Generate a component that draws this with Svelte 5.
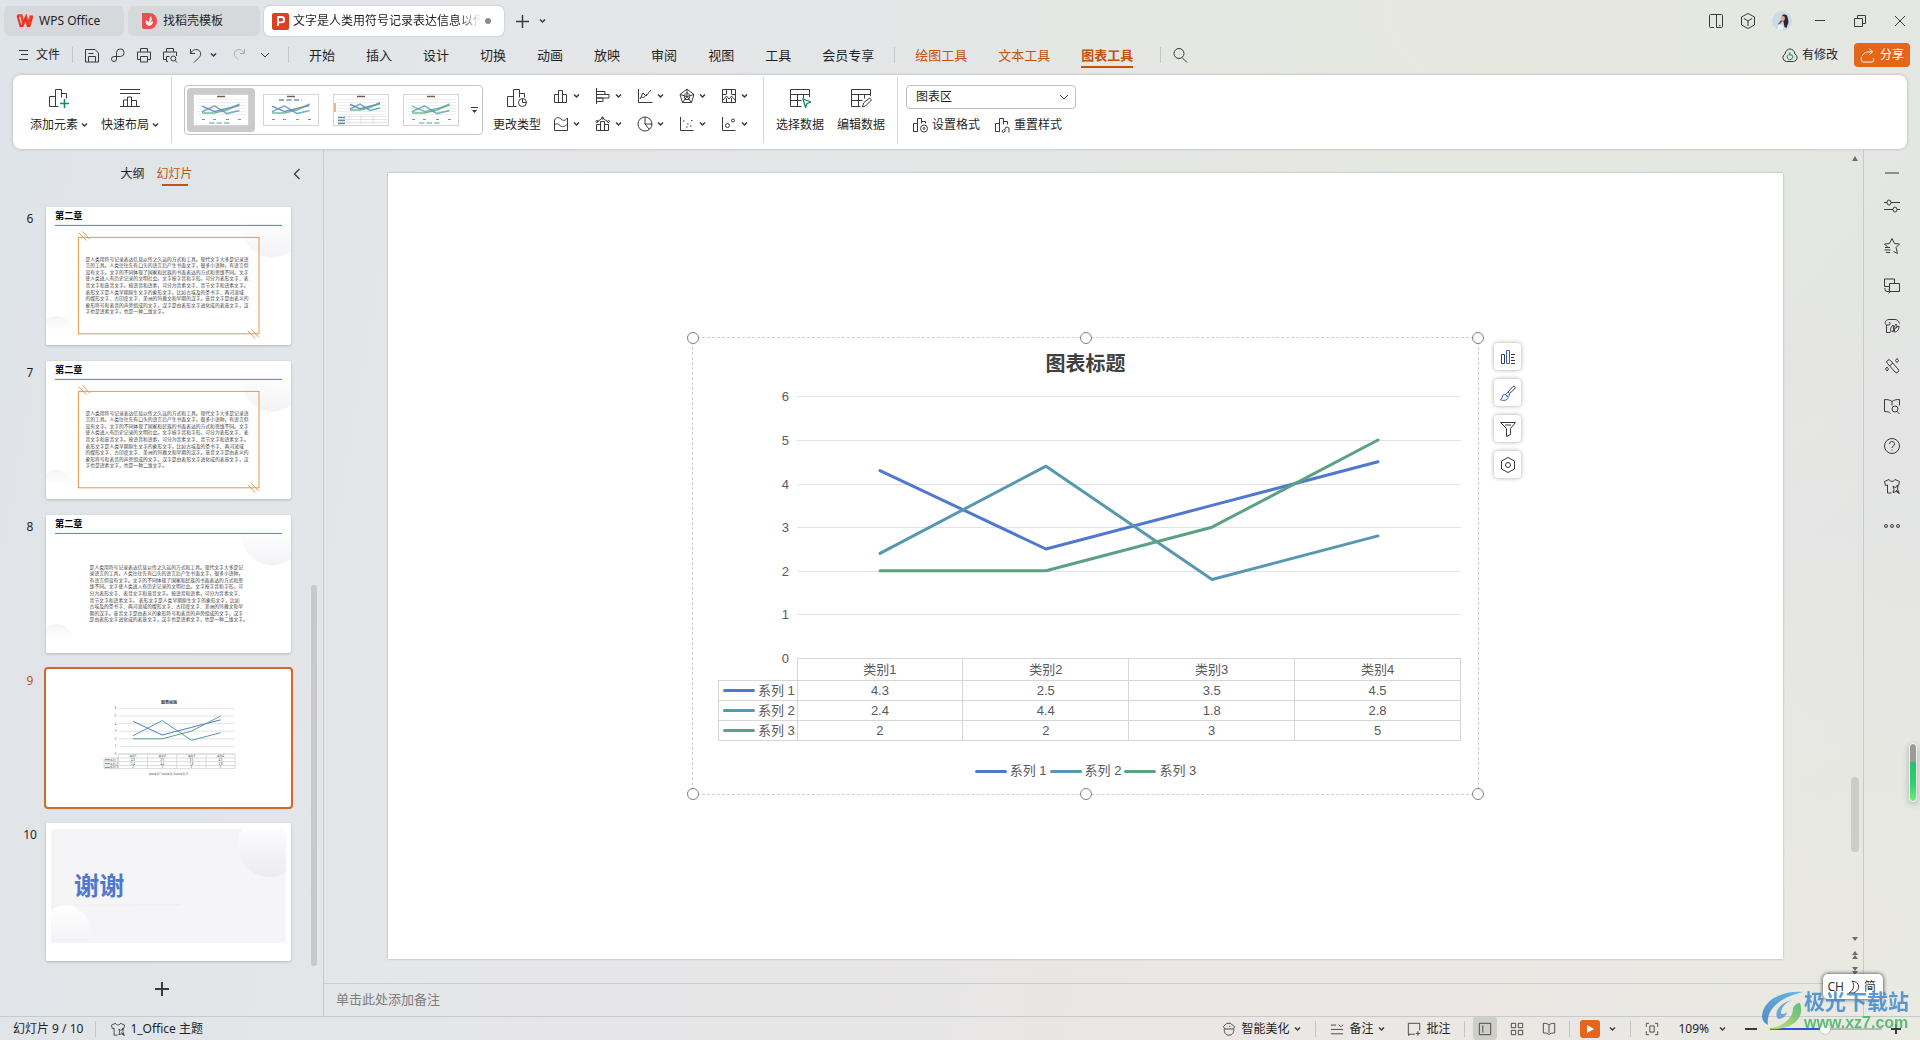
<script>
  // Outline icons, drawn on a 16 x 16 grid: [main path, accent path, accent colour]
  const icons = {
    save: ["M1.5 2.5h9.5l3.5 3.5v9h-13zM4.5 6.5h5M4.5 15v-5.500h7v5.500"],
    link: ["M6.500 5.500a3.800 3.800 0 1 1 4 4h-6.500a2.500 2.500 0 1 0 2.500 2.500v-6.500"],
    print: ["M4.500 5v-3.500h7v3.500M4 12.500h-2.500v-7.500h13v7.500h-2.500M4.500 9.500h7v5.500h-7z"],
    preview: ["M4.500 5v-3.500h7v3.500M4 12.500h-2.500v-7.500h13v4M6 14.500h-1.500v-5h3M13.800 11.500a2.500 2.500 0 1 1-5 0 2.500 2.500 0 1 1 5 0M13 13.500l2 2"],
    undo: ["M2.500 2v4.500h4.500M2.500 6.500c2-4 6-5 8.500-3s2 5 0 7l-5 5"],
    redo: ["M13.500 2v4.500h-4.500M13.500 6.500c-2-4-6-5-8.500-3s-2 5 0 7l2 2"],
    search: ["M12 6.500a5 5 0 1 1-10 0 5 5 0 1 1 10 0M10 10.500l5 5"],
    sidebar: ["M1.500 2.500a1 1 0 0 1 1-1h11a1 1 0 0 1 1 1v11a1 1 0 0 1-1 1h-5v-13M6 14.500h-3.500a1 1 0 0 1-1-1v-11M11 12.500h1.500"],
    cube: ["M8 .500l6.500 3.500v8l-6.500 3.500-6.500-3.500v-8zM4 5.500l4 2.500 4-2.500M8 8v5"],
    restore: ["M2.500 5.500h8v8h-8zM5.500 5v-2.500h8v8h-2.500"],
    close: ["M3 3l10 10M13 3l-10 10"],
    cloud: ["M4.500 14.500a4 4 0 0 1-1.500-7.500c.500-3 2.500-5 5-5s4.500 2 5 5a4 4 0 0 1-1.500 7.500z", "M6.500 7.500a2.800 2.800 0 1 0 3.500.500M8 5l-.5 3h2.500", "#16895f"],
    share: ["M1.500 9.500v3.500a2 2 0 0 0 2 2h9a2 2 0 0 0 2-2v-2.500M2.500 8.500c1-3 4-4.500 10.500-4.500M10 1l3.500 3-3.500 3"],
    bars: ["M1.500 14.500v-8h4v8M5.500 14.500v-12h4v12M9.500 6.500h4v8h-12"],
    hbars: ["M1.500 0v16M2 3.500h8v3h-8M2 6.500h12v3.500h-12M2 10h6v3.500h-6"],
    line: ["M1.500 1v13.500h14M3 11l3-6 3 3 5-6M4 9c3 1 4 0 6-3"],
    radar: ["M8 1l7 5.500-2.500 8h-9l-2.500-8zM8 4.500l3 3-1.200 4h-3.600l-1.200-4zM8 1v7M1 6.500l7 2 7-2M3.500 14.500l4.500-6 4.500 6"],
    stock: ["M1.500 1.500h13v13h-13zM5.500 2v4M10.500 2v4M2 6.500h3.500M10.500 6.500h3.500M2 12l3.500-4 2.500 3 2.500-3 3.500 4M5.500 10v4M10.500 10v4"],
    area: ["M1.500 4c2-3 4-3 6.500-1s4 2 6.500-1v12.500h-13zM2 8.500c2-1 3-1 5 1s5 1 7-1"],
    combo: ["M1.500 14.500v-6h4v6M5.500 14.500v-9h4v9M9.500 8.500h4v6h-12M2 6l5.500-4 5.500 4M3 5.500a1 1 0 1 1-2 0 1 1 0 1 1 2 0M8.500 2a1 1 0 1 1-2 0 1 1 0 1 1 2 0M14.500 5.500a1 1 0 1 1-2 0 1 1 0 1 1 2 0"],
    pie: ["M15 8a7 7 0 1 1-14 0 7 7 0 1 1 14 0M8 1v7h7M8 8l4 5"],
    scatter: ["M1.500 1v13.500h13M4 5h1.500M8 8h1.500M12 4.500h1.500M7 11h1.500M11 10h1.500"],
    bubble: ["M1.500 1v13.500h13M8.500 9.500a2 2 0 1 1-4 0 2 2 0 1 1 4 0M13.500 4.500a1.500 1.500 0 1 1-3 0 1.500 1.500 0 1 1 3 0"],
    format: ["M1.500 14.500v-8h4v8zM5.500 14.500v-13h4v5M9.500 4.500h4v2M15.500 11.500a3.500 3.500 0 1 1-7 0 3.500 3.500 0 1 1 7 0M13 11.500a1 1 0 1 1-2 0 1 1 0 1 1 2 0"],
    reset: ["M1.500 14.500v-8h4v8zM5.500 14.500v-13h4v6M9.500 4.500h4v3M10 14.500h1v-2.500a2 2 0 0 1 4 0v3.500M9.500 12.500l-1.500 2 2 1.500"],
    settings: ["M0 4.500h3M7 4.500h9M7 4.500a2 2.500 0 1 1-4 0 2 2.500 0 1 1 4 0M0 11.500h9M13 11.500h3M13 11.500a2 2.500 0 1 1-4 0 2 2.500 0 1 1 4 0"],
    star: ["M3.500 9l-3-3 5-.5 2.500-5 2.500 5 5 .500-3.500 3.500 1.500 6-4-2M1 9.500h5M.500 12h6M2 14.500h4"],
    swap: ["M5.500 8.500h-5v-7.500h10v4.500M5.500 5.500h10v8h-10zM1 10v1.500a2 2 0 0 0 2 2h3M4.500 11.500l2 2-2 2"],
    leaf: ["M1.500 6.500c-1-3 1-5 3.500-5h6c2 0 3.500 1 4.500 4M2 7h3c1 0 1.500-1 .500-3M2.500 7v7.500h4M7 14c-1-3 0-5 2-7 1 3 1 5-1 7M10 14c0-3 2-5 5-6 0 3-1 6-5 6M10 14c-.5-3 .5-6 2-8 1 1 1 2 0 4"],
    magic: ["M3.500 2.500a2 2 0 0 1 3 0l7.500 8.500a2 2 0 0 1-3 3l-7.500-8.500a2 2 0 0 1 0-3zM6 7.500l3-2.500M13 .500l1.500 2-1.500 2-1.500-2zM3 9l1.500 2-1.500 2-1.500-2z"],
    book: ["M8 3.500c-2-1.500-4-2-7.500-2v12c3 0 5 .500 6 2M8 3.500c2-1.500 4-2 7.500-2v6M8 3.500v4M14 11a3 3 0 1 1-6 0 3 3 0 1 1 6 0M13 13.500l2.500 2.500"],
    help: ["M15.500 8a7.500 7.500 0 1 1-15 0 7.500 7.500 0 1 1 15 0M5.500 6a2.500 2.500 0 1 1 3.500 2.300c-.8.400-1 .8-1 1.700M8 11.500v1"],
    shirt: ["M5 1.500c1 2.500 5 2.500 6 0l4.500 2-1 4h-2M5 1.500l-4.500 2 1 4 2-.5v8h4M9 8l2 1.500 3-1.500-.5 3 1.500 4-3-1.500-3 1 1-3zM12 12l3.500 4"],
    more: ["M3.500 8a1.500 1.500 0 1 1-3 0 1.500 1.500 0 1 1 3 0M9.500 8a1.500 1.500 0 1 1-3 0 1.500 1.500 0 1 1 3 0M15.500 8a1.500 1.500 0 1 1-3 0 1.500 1.500 0 1 1 3 0"],
    chartEl: ["M1.500 5.500h3v9h-3zM11 5.500h4M11 8.500h3M11 11.500h4M11 14.500h4", "M6.500 1.500h3v13h-3z", "#2f62d9"],
    brush: ["M8 7l5-5.500c1-.8 3 .7 2 2l-5.500 5", "M5.500 9.500l2.500-2.500 1.500 1.500 0 2-1.500 1M5.500 9.500c-2-.5-3.500 1-3 2.500l-2 3c3 .500 6.500 1 7.500-2.500zM5.500 9.500l2.500 2", "#2f62d9"],
    filter: ["M.500 1.500h15l-5 6v6l-4 2v-8zM5 4h6"],
    hex: ["M8 .500l6.500 3.500v8l-6.500 3.500-6.500-3.500v-8zM10.500 8a2.500 2.500 0 1 1-5 0 2.500 2.500 0 1 1 5 0"],
    beauty: ["M2.500 8c0 4.500 1.500 7 5.500 7s5.500-2.500 5.500-7M1.500 5.500l4-4h4l5 4-2 2.500h-9zM8 4.500l1.500 1"],
    notes: ["M1 3.500h6M10 3l2.500 2.500 2.500-2.500M1 8.500h14M1 13.500h14"],
    comment: ["M9 14h-7v1.500l-.5-2v-12h13v8M12.500 10.500v5M10 13h5"],
    normal: ["M1.500 1.500h13v13h-13zM5.500 4v8"],
    grid: ["M1.500 1.500h5v5h-5zM9.500 1.500h5v5h-5zM1.500 9.500h5v5h-5zM9.500 9.500h5v5h-5z"],
    read: ["M8 3.500c-1-1.500-3.500-2-6.500-2v11c3 0 5.500.500 6.500 2 1-1.500 3.500-2 6.500-2v-11c-3 0-5.500.500-6.500 2zM8 3.500v9"],
    fit: ["M4.500 1.500h-3v4M11.500 1.500h3v4M4.500 14.500h-3v-4M11.500 14.500h3v-4M5.500 4.500h5v7h-5z"]
  };

  const quick = ["save", "link", "print", "preview"];
  const menus = ["开始", "插入", "设计", "切换", "动画", "放映", "审阅", "视图", "工具", "会员专享"];
  const toolMenus = ["绘图工具", "文本工具", "图表工具"];
  const chartTypes = ["bars", "hbars", "line", "radar", "stock", "area", "combo", "pie", "scatter", "bubble"];
  const rail = ["settings", "star", "swap", "leaf", "magic", "book", "help", "shirt", "more"];
  const chartTools = ["chartEl", "brush", "filter", "hex"];
  const handles = ["tl", "tc", "tr", "bl", "bc", "br"];

  const categories = ["类别1", "类别2", "类别3", "类别4"];
  const series = [
    { name: "系列 1", color: "#5078ce", values: [4.3, 2.5, 3.5, 4.5] },
    { name: "系列 2", color: "#5798b0", values: [2.4, 4.4, 1.8, 2.8] },
    { name: "系列 3", color: "#5aa282", values: [2, 2, 3, 5] }
  ];
  const ticks = [6, 5, 4, 3, 2, 1, 0];

  const wide = [
    "是人类用符号记录表达信息以传之久远的方式和工具。现代文字大多是记录语",
    "言的工具。人类往往先有口头的语言后产生书面文字，很多小语种，有语言但",
    "没有文字。文字的不同体现了国家和民族的书面表达的方式和思维不同。文字",
    "使人类进入有历史记录的文明社会。文字按字音和字形，可分为表形文字、表",
    "音文字和意音文字。按语音和语素，可分为音素文字、音节文字和语素文字。",
    "表形文字是人类早期原生文字的象形文字，比如古埃及的圣书字、两河流域",
    "的楔形文字、古印度文字、美洲的玛雅文和早期的汉字。意音文字是由表义的",
    "象形符号和表音的声旁组成的文字，汉字是由表形文字进化成的表意文字，汉",
    "字也是语素文字，也是一种二维文字。"
  ];
  const narrow = [
    "是人类用符号记录表达信息以传之久远的方式和工具。现代文字大多是记",
    "录语言的工具。人类往往先有口头的语言后产生书面文字，很多小语种，",
    "有语言但没有文字。文字的不同体现了国家和民族的书面表达的方式和思",
    "维不同。文字使人类进入有历史记录的文明社会。文字按字音和字形，可",
    "分为表形文字、表音文字和意音文字。按语音和语素，可分为音素文字、",
    "音节文字和语素文字。 表形文字是人类早期原生文字的象形文字，比如",
    "古埃及的圣书字、两河流域的楔形文字、古印度文字、美洲的玛雅文和早",
    "期的汉字。意音文字是由表义的象形符号和表音的声旁组成的文字，汉字",
    "是由表形文字进化成的表意文字，汉字也是语素文字，也是一种二维文字。"
  ];
  const slides = [
    { no: 6, kind: "text", boxed: true, lines: wide },
    { no: 7, kind: "text", boxed: true, lines: wide },
    { no: 8, kind: "text", boxed: false, lines: narrow },
    { no: 9, kind: "chart" },
    { no: 10, kind: "thanks" }
  ];

  let current = $state(9);
  let activeMenu = $state("图表工具");
  let layout = $state(0);
  let zoom = $state(49);

  // Turns the values of a series into the points of a polyline
  function points(values, x0, step, yZero, unit) {
    return values.map((v, i) => `${x0 + step * i},${yZero - v * unit}`).join(" ");
  }
</script>

{#snippet icon(name, size = 16)}
  <svg class="icon" width={size} height={size} viewBox="0 0 16 16" aria-hidden="true">
    <path d={icons[name][0]} />
    {#if icons[name][1]}<path d={icons[name][1]} stroke={icons[name][2]} />{/if}
  </svg>
{/snippet}

{#snippet chev()}
  <svg class="icon chev" width="7" height="6" viewBox="0 0 7 6" aria-hidden="true"><path d="M1 1.500l2.500 2.500 2.500-2.500" /></svg>
{/snippet}

{#snippet bigChev()}
  <svg class="icon" width="12" height="12" viewBox="0 0 12 12" aria-hidden="true"><path d="M2 4l4 4 4-4" /></svg>
{/snippet}

<div class="app">
  <header class="titlebar">
    <button class="doc home">
      <svg width="17" height="14" viewBox="0 0 17 14" aria-hidden="true">
        <path d="M1.500 1.500h4l1.500 8 3-6.500 1.500 7 3.500-8.500" fill="none" stroke="#f0412d" stroke-width="2.400" />
        <path d="M1.500 1.500l3 10.500h2l3.500-8 2 8h1.500l3-10.500" fill="none" stroke="#e8321f" stroke-width="2" />
      </svg>
      WPS Office
    </button>
    <button class="doc docer">
      <svg width="15" height="16" viewBox="0 0 15 16" aria-hidden="true">
        <path d="M0 0h8a7 8 0 0 1 0 16h-6a2 2 0 0 1-2-2z" fill="#ee4d50" />
        <path d="M7 13c-3-1-4-3-3-6 2 1 3 2 3 4 0-3 0-5 2-8 1 3 1 5-1 7l3-2c0 3-1 4-4 5z" fill="#fff" />
      </svg>
      找稻壳模板
    </button>
    <button class="doc open">
      <svg width="17" height="17" viewBox="0 0 17 17" aria-hidden="true">
        <rect width="17" height="17" rx="2" fill="#dd3f26" />
        <path d="M6 13v-9h3.500a2.700 2.700 0 0 1 0 5.400h-3.500" fill="none" stroke="#fff" stroke-width="1.800" />
      </svg>
      <span class="name">文字是人类用符号记录表达信息以传</span>
      <i class="dot"></i>
    </button>
    <button class="plain" aria-label="新建">
      <svg class="icon" width="15" height="15" viewBox="0 0 15 15"><path d="M7.500 1v13M1 7.500h13" stroke-width="1.500" /></svg>
    </button>
    <button class="plain" aria-label="标签列表">{@render chev()}</button>
    <div class="window">
      <button class="plain" aria-label="侧栏">{@render icon("sidebar")}</button>
      <button class="plain" aria-label="应用">{@render icon("cube")}</button>
      <button class="plain" aria-label="账号">
        <svg width="20" height="20" viewBox="0 0 20 20" aria-hidden="true">
          <circle cx="10" cy="10" r="10" fill="#cbdbe6" />
          <path d="M10 5c1-2 5-2 5.500 1l1 5-2 6-2-1-1-5z" fill="#2b2630" />
          <path d="M9 6c1-2 4-1 4 1s-1 3-2 3-2-2-2-4z" fill="#d9a9a0" />
          <path d="M9 9l-3 4 1 1 4-4z" fill="#8b5a55" />
          <path d="M5 19l2-6 4 2 0 4z" fill="#e9f2f8" />
        </svg>
      </button>
      <button class="plain" aria-label="最小化"><svg class="icon" width="12" height="16" viewBox="0 0 12 16"><path d="M1 7.500h10" /></svg></button>
      <button class="plain" aria-label="还原">{@render icon("restore")}</button>
      <button class="plain" aria-label="关闭">{@render icon("close")}</button>
    </div>
  </header>

  <nav class="menubar">
    <button class="file">
      <svg class="icon" width="10" height="12" viewBox="0 0 10 12" aria-hidden="true"><path d="M0 1.500h9M2 5.500h7M0 10.500h9" /></svg>
      文件
    </button>
    <span class="rule"></span>
    <div class="quick">
      {#each quick as q}
        <button aria-label={q}>{@render icon(q)}</button>
      {/each}
      <button class="undo" aria-label="撤销">{@render icon("undo")}{@render chev()}</button>
      <button class="redo" aria-label="恢复">{@render icon("redo")}</button>
      <button aria-label="更多">{@render bigChev()}</button>
    </div>
    <span class="rule"></span>
    <div class="menus">
      {#each menus as m}
        <button class="menu" class:active={activeMenu === m} onclick={() => (activeMenu = m)}>{m}</button>
      {/each}
    </div>
    <span class="rule"></span>
    <div class="menus tools">
      {#each toolMenus as m}
        <button class="menu" class:active={activeMenu === m} onclick={() => (activeMenu = m)}>{m}</button>
      {/each}
    </div>
    <span class="rule"></span>
    <button class="plain" aria-label="搜索">{@render icon("search")}</button>
    <div class="account">
      <button class="sync">{@render icon("cloud")}有修改</button>
      <button class="share">{@render icon("share", 15)}分享</button>
    </div>
  </nav>

  <section class="ribbon">
    <button class="large">
      <svg class="icon" width="22" height="20" viewBox="0 0 22 20" aria-hidden="true">
        <path d="M1.500 18.500v-10h6v10zM7.500 18.500v-17h6v8M13.500 5.500h5v5M7.500 18.500h3" />
        <path d="M16.500 11v9M12 15.500h9" stroke="#16895f" stroke-width="1.500" />
      </svg>
      <span>添加元素{@render chev()}</span>
    </button>
    <button class="large">
      <svg class="icon" width="22" height="20" viewBox="0 0 22 20" aria-hidden="true">
        <path d="M1 1.500h20M1 5.500h20M1 18.500h20M4.500 18v-6h4v6M8.500 18v-9h4v9M12.500 12.500h5v5.500" />
      </svg>
      <span>快速布局{@render chev()}</span>
    </button>
    <span class="split"></span>
    <div class="gallery">
      {#each [0, 1, 2, 3] as g}
        <button class="preset" class:chosen={layout === g} aria-label="布局" onclick={() => (layout = g)}>
          <svg width="56" height="32" viewBox="0 0 112 64" aria-hidden="true">
            <rect x="1" y="1" width="110" height="62" fill="#fff" stroke="#d4d4d4" stroke-width="2" />
            <path d="M48 5h16" stroke="#775b4c" stroke-width="3" />
            {#if g !== 1}
              <path d="M8 11h98M8 17h98M8 23h98M8 29h98M8 35h98M8 41h98" stroke="#dedede" />
            {/if}
            {#if g === 1}<path d="M32 12h46" stroke="#6f93c8" stroke-width="3" stroke-dasharray="10 5" />{/if}
            {#if g === 2}
              <path d="M22 45h86M8 51h100M8 57h100M32 43v18M56 43v18M80 43v18" stroke="#c9c9c9" />
              <path d="M10 47h14M10 53h14M10 59h14" stroke="#5f8f96" stroke-width="3" />
              <path d="M4 18v18" stroke="#d2a36f" stroke-width="3" />
            {:else}
              <path d="M18 51h6M40 51h6M66 51h6M90 51h6" stroke="#8c8c8c" stroke-width="2" />
              {#if g !== 1}<path d="M32 58h44" stroke="#5798b0" stroke-width="2" stroke-dasharray="11 4" />{/if}
            {/if}
            {#each series as s}
              <polyline points={points(s.values, g === 2 ? 34 : 18, g === 2 ? 20 : 25, g === 2 ? 42 : 50, g === 2 ? 5 : 6)} fill="none" stroke={g === 3 && s.values[0] === 4.3 ? "#55b4a8" : s.color} stroke-width="3" opacity="0.8" />
            {/each}
          </svg>
        </button>
      {/each}
      <button class="plain drop" aria-label="更多布局">
        <svg class="icon" width="7" height="8" viewBox="0 0 7 8"><path d="M0 1.500h7" /><path d="M1 4h5l-2.500 3z" fill="#333" stroke="none" /></svg>
      </button>
    </div>
    <button class="large">
      <svg class="icon" width="22" height="20" viewBox="0 0 22 20" aria-hidden="true">
        <path d="M1.500 18.500v-10h6v10zM7.500 18.500v-17h6v8M13.500 5.500h5v4M7.500 18.500h3M20.500 14.500a4 4 0 1 1-8 0 4 4 0 1 1 8 0M16.500 10.500v4h4" />
      </svg>
      <span>更改类型</span>
    </button>
    <div class="types">
      {#each chartTypes as t}
        <button aria-label={t}>{@render icon(t)}{@render chev()}</button>
      {/each}
    </div>
    <span class="split"></span>
    <button class="large">
      <svg class="icon" width="22" height="20" viewBox="0 0 22 20" aria-hidden="true">
        <path d="M20.500 9v-7.500h-19v17h11M1.500 6.500h19M1.500 12.500h11M8.500 6.500v12M14.500 6.500v4" />
        <path d="M14 11l8 3-4 1.500-1.500 4z" stroke="#16895f" stroke-width="1.300" />
      </svg>
      <span>选择数据</span>
    </button>
    <button class="large">
      <svg class="icon" width="22" height="20" viewBox="0 0 22 20" aria-hidden="true">
        <path d="M20.500 8v-6.500h-19v17h9M1.500 6.500h19M1.500 12.500h11M8.500 6.500v12M14.500 6.500v4M12.500 19l1-4 6-5 2 2-6 6z" />
      </svg>
      <span>编辑数据</span>
    </button>
    <span class="split"></span>
    <div class="area">
      <div class="combo">
        <select aria-label="图表元素"><option>图表区</option></select>
        {@render bigChev()}
      </div>
      <div class="styles">
        <button>{@render icon("format")}设置格式</button>
        <button>{@render icon("reset")}重置样式</button>
      </div>
    </div>
  </section>

  <main>
    <aside class="panel">
      <div class="switch">
        <span class="side"></span>
        <div class="pair">
          <button>大纲</button>
          <button class="on">幻灯片</button>
        </div>
        <div class="side">
          <button class="plain" aria-label="收起"><svg class="icon" width="8" height="12" viewBox="0 0 8 12"><path d="M6.500 1l-5 5 5 5" stroke-width="1.300" /></svg></button>
        </div>
      </div>
      <ol class="list">
        {#each slides as s}
          <li class:current={current === s.no}>
            <span class="no">{s.no}</span>
            <button class="thumb" aria-label="幻灯片 {s.no}" onclick={() => (current = s.no)}>
              <svg viewBox="0 0 1225 690">
                <defs>
                  <linearGradient id="fade" x1="0" y1="0" x2="0" y2="1"><stop offset="0" stop-color="#fff" /><stop offset="1" stop-color="#f3f3f6" /></linearGradient>
                  <linearGradient id="rise" x1="0" y1="0" x2="0" y2="1"><stop offset="0" stop-color="#f4f4f7" /><stop offset="0.800" stop-color="#fff" /></linearGradient>
                  <linearGradient id="shade" x1="0" y1="0" x2="0" y2="1"><stop offset="0" stop-color="#fcfcfd" /><stop offset="1" stop-color="#ebebf1" /></linearGradient>
                </defs>
                {#if s.kind === "text"}
                  <path d="M985 60a152 152 0 0 0 240 160v-160z" fill="url(#fade)" />
                  <path d="M0 562a85 85 0 0 1 136 76h-136z" fill="url(#rise)" />
                  <text x="45" y="62" class="head">第二章</text>
                  <path d="M45 92h1135" stroke="#5a7bd0" stroke-width="5" />
                  {#if s.boxed}
                    <rect x="162" y="152" width="903" height="482" fill="none" stroke="#e6984a" stroke-width="5" />
                    <path d="M164 130l38 38M182 122l38 40M1008 618l38 40M1026 612l38 38" stroke="#e6984a" stroke-width="5" />
                  {/if}
                  {#each s.lines as line, i}
                    <text x={s.boxed ? 197 : 218} y={268 + i * 33} class="body">{line}</text>
                  {/each}
                {:else if s.kind === "chart"}
                  <text x="615" y="174" class="mini-title">图表标题</text>
                  {#each ticks as t}
                    <path d="M362 {425 - t * 38}h583" stroke="#dcdcdc" stroke-width="4" />
                    <text x="352" y={430 - t * 38} class="mini end">{t}</text>
                  {/each}
                  <path d="M362 425h583v73h-655v-53h655M290 463h655M290 483h655M362 425v73M508 425v73M654 425v73M800 425v73" fill="none" stroke="#d2d2d2" stroke-width="4" />
                  {#each categories as c, i}
                    <text x={435 + i * 146} y="441" class="mini">{c}</text>
                  {/each}
                  {#each series as r, n}
                    <polyline points={points(r.values, 435, 146, 425, 38)} fill="none" stroke={r.color} stroke-width="5" />
                    <path d="M294 {454 + n * 19}h26M{515 + n * 65} 525h26" stroke={r.color} stroke-width="5" />
                    <text x="340" y={459 + n * 19} class="mini">{r.name}</text>
                    <text x={560 + n * 65} y="530" class="mini">{r.name}</text>
                    {#each r.values as v, i}
                      <text x={435 + i * 146} y={459 + n * 19} class="mini">{v}</text>
                    {/each}
                  {/each}
                {:else}
                  <rect x="25" y="30" width="1175" height="570" fill="#f5f5f8" />
                  <path d="M979 30a160 160 0 0 0 221 217v-217z" fill="url(#shade)" />
                  <path d="M25 436a122 122 0 0 1 175 164h-175z" fill="url(#fade)" />
                  <path d="M145 412l530-4" stroke="#f0f0f4" stroke-width="6" />
                  <text x="140" y="360" class="thanks">谢谢</text>
                {/if}
              </svg>
            </button>
          </li>
        {/each}
      </ol>
      <button class="plain add" aria-label="新建幻灯片">
        <svg class="icon" width="16" height="16" viewBox="0 0 16 16"><path d="M8 1v14M1 8h14" stroke-width="2" /></svg>
      </button>
      <div class="panel-scroll"></div>
    </aside>

    <div class="editor">
      <div class="workspace">
        <div class="slide">
          <div class="chart">
            {#each handles as h}<i class="handle {h}"></i>{/each}
            <h1>图表标题</h1>
            <svg class="plot" viewBox="0 0 743 274">
              {#each ticks as t}
                <path d="M79 {Math.round(274 - t * 43.6) + 0.5}h664" stroke={t ? "#e3e3e3" : "none"} />
                <text x="71" y={Math.round(279 - t * 43.6)}>{t}</text>
              {/each}
              {#each series as s}
                <polyline points={points(s.values, 162, 166, 274, 43.6)} fill="none" stroke={s.color} stroke-width="3" stroke-linecap="round" stroke-linejoin="round" />
              {/each}
            </svg>
            <table>
              <thead>
                <tr>
                  <td></td>
                  {#each categories as c}<th>{c}</th>{/each}
                </tr>
              </thead>
              <tbody>
                {#each series as s}
                  <tr>
                    <th><span class="key"><i style="background: {s.color}"></i>{s.name}</span></th>
                    {#each s.values as v}<td>{v}</td>{/each}
                  </tr>
                {/each}
              </tbody>
            </table>
            <div class="legend">
              {#each series as s}
                <span class="key"><i style="background: {s.color}"></i>{s.name}</span>
              {/each}
            </div>
            <div class="chart-tools">
              {#each chartTools as t}
                <button aria-label={t}>{@render icon(t)}</button>
              {/each}
            </div>
          </div>
        </div>
        <div class="scroll">
          <svg width="8" height="8" viewBox="0 0 8 8"><path d="M1 7h6l-3-5z" /></svg>
          <div class="track"><i></i></div>
          <svg width="8" height="8" viewBox="0 0 8 8"><path d="M1 2h6l-3 4z" /></svg>
          <svg width="8" height="8" viewBox="0 0 8 8"><path d="M1 4h6l-3-4zM1 8h6l-3-4z" /></svg>
          <svg width="8" height="8" viewBox="0 0 8 8"><path d="M1 0h6l-3 4zM1 4h6l-3 4z" /></svg>
        </div>
      </div>
      <div class="notes">单击此处添加备注</div>
    </div>

    <aside class="rail">
      <span class="dash"></span>
      {#each rail as r}
        <button class="plain" aria-label={r}>{@render icon(r)}</button>
      {/each}
      <div class="meter"></div>
    </aside>
  </main>

  <footer class="status">
    <span>幻灯片 9 / 10</span>
    <span class="rule"></span>
    <button class="theme">{@render icon("shirt", 14)}1_Office 主题</button>
    <div class="right">
      <button>{@render icon("beauty", 14)}智能美化{@render chev()}</button>
      <span class="rule"></span>
      <button class="remark">{@render icon("notes", 14)}备注{@render chev()}</button>
      <button>{@render icon("comment", 14)}批注</button>
      <span class="rule"></span>
      <div class="views">
        <button class="picked" aria-label="普通视图">{@render icon("normal", 14)}</button>
        <button aria-label="浏览视图">{@render icon("grid", 14)}</button>
        <button aria-label="阅读视图">{@render icon("read", 14)}</button>
      </div>
      <span class="rule"></span>
      <button class="play" aria-label="放映"><svg width="20" height="18" viewBox="0 0 20 18"><path d="M7 5l7 4-7 4z" fill="#fff" /></svg></button>
      <button aria-label="放映选项">{@render chev()}</button>
      <span class="rule"></span>
      <button class="fit" aria-label="适应窗口">{@render icon("fit", 14)}</button>
      <button class="percent">109%{@render chev()}</button>
      <button class="step" aria-label="缩小"><svg class="icon" width="14" height="14" viewBox="0 0 14 14"><path d="M1 7h12" stroke-width="2" /></svg></button>
      <input type="range" min="0" max="100" aria-label="缩放" bind:value={zoom} style="--pos: {zoom}%" />
      <button class="step" aria-label="放大"><svg class="icon" width="14" height="14" viewBox="0 0 14 14"><path d="M7 2v10M2 7h10" stroke-width="2" /></svg></button>
    </div>
  </footer>

  <div class="ime">
    CH
    <svg width="12" height="14" viewBox="0 0 12 14"><path d="M4 1c8 1 9 8 2 12H1c5-3 6-8 3-12z" fill="none" stroke="#333" /></svg>
    简
  </div>
  <div class="mark">
    <svg width="42" height="40" viewBox="0 0 42 40" aria-hidden="true">
      <defs>
        <linearGradient id="sky" x1="1" y1="0" x2="0" y2="1"><stop offset="0" stop-color="#4db4ea" /><stop offset="1" stop-color="#3f78c0" /></linearGradient>
        <linearGradient id="grass" x1="1" y1="0" x2="0" y2="1"><stop offset="0" stop-color="#3fb572" /><stop offset="1" stop-color="#d5df55" /></linearGradient>
      </defs>
      <path d="M42 1c-20-2-40 8-41 24 0 4 2 7 6 9-2-12 6-26 35-33z" fill="url(#sky)" />
      <path d="M39 12c6 18-12 28-33 26 14-2 26-9 26-21 1-3 4-5 7-5z" fill="url(#grass)" />
      <path d="M31 9c-12 3-19 12-14 19 4 0 8-2 9-7-2 2-5 3-6 1 0-5 4-10 11-13z" fill="#5c9bd6" />
    </svg>
    <div>
      <b>极光下载站</b>
      <em>www.xz7.com</em>
    </div>
  </div>
</div>

<style>
  :global(body) {
    margin: 0;
  }
  .app {
    position: relative;
    display: flex;
    flex-direction: column;
    height: 100vh;
    overflow: hidden;
    color: #1f1f1f;
    font: 12px/16px "Noto Sans", "Noto Sans CJK SC", sans-serif;
    background:
      radial-gradient(ellipse 50% 90% at 70% 100%, rgba(238, 232, 228, 0.8), transparent),
      radial-gradient(ellipse 40% 60% at 78% 0%, rgba(231, 233, 223, 0.9), transparent),
      radial-gradient(ellipse 30% 50% at 100% 100%, rgba(231, 236, 222, 0.9), transparent),
      linear-gradient(100deg, #dfe4e8, #e5e6e8 30%, #e2e5e8 55%, #e2e4e4);
  }
  button {
    display: flex;
    align-items: center;
    padding: 0;
    border: 0;
    background: none;
    color: inherit;
    font: inherit;
    white-space: nowrap;
  }
  .plain {
    justify-content: center;
  }
  .icon {
    flex: none;
    fill: none;
    stroke: #3a3a3a;
  }
  .chev {
    stroke-width: 1.5;
  }
  .rule {
    flex: none;
    width: 1px;
    height: 16px;
    background: #c4c7ca;
  }

  /* Title bar */
  .titlebar {
    display: flex;
    align-items: center;
    flex: none;
    height: 30px;
    padding: 6px 8px 0 4px;
  }
  .doc {
    box-sizing: border-box;
    height: 30px;
    margin-right: 4px;
    gap: 6px;
    border-radius: 6px;
    background: #d6d9dc;
  }
  .home {
    width: 120px;
    padding-left: 12px;
  }
  .docer {
    width: 132px;
    padding-left: 14px;
  }
  .open {
    width: 240px;
    margin-right: 11px;
    padding: 0 13px 0 8px;
    gap: 4px;
    background: #fff;
    box-shadow: 0 0 2px #aaadb0;
  }
  .name {
    flex: 1;
    overflow: hidden;
    text-align: left;
    mask-image: linear-gradient(90deg, #000 88%, transparent);
  }
  .dot {
    flex: none;
    width: 6px;
    height: 6px;
    border-radius: 50%;
    background: #8c8c8c;
  }
  .titlebar > .plain {
    margin-right: 9px;
  }
  .window {
    display: flex;
    align-items: center;
    gap: 16px;
    margin-left: auto;
  }
  .window .plain:nth-child(n + 4) {
    min-width: 24px;
  }

  /* Menu bar */
  .menubar {
    display: flex;
    align-items: center;
    flex: none;
    height: 38px;
    padding: 0 10px 1px 0;
  }
  .file {
    gap: 7px;
    margin: 0 12px 0 19px;
  }
  .quick {
    display: flex;
    align-items: center;
    margin: 0 10px 0 6px;
  }
  .quick button {
    justify-content: center;
    width: 26px;
    height: 26px;
  }
  .quick .undo {
    width: 39px;
    gap: 6px;
  }
  .quick .redo {
    opacity: 0.35;
    margin: 0 0 0 4px;
  }
  .menus {
    display: flex;
    gap: 31px;
    margin: 0 20px;
    font-size: 13px;
  }
  .tools {
    color: #c6510f;
    margin: 0 27px 0 20px;
  }
  .menu {
    box-sizing: border-box;
    height: 26px;
    border-top: 2px solid transparent;
    border-bottom: 2px solid transparent;
  }
  .active {
    border-bottom-color: #c6510f;
    font-weight: bold;
  }
  .menubar > .plain {
    margin-left: 11px;
  }
  .account {
    display: flex;
    gap: 16px;
    margin-left: auto;
  }
  .sync {
    gap: 4px;
  }
  .share {
    height: 24px;
    gap: 5px;
    padding: 0 6px;
    border-radius: 4px;
    background: #e3661b;
    color: #fff;
  }
  .share :global(.icon) {
    stroke: #fff;
  }

  /* Ribbon */
  .ribbon {
    box-sizing: border-box;
    display: flex;
    align-items: center;
    flex: none;
    height: 74px;
    margin: 0 13px;
    padding: 0 17px 4px;
    border-radius: 8px;
    background: #fff;
    box-shadow: 0 0 3px #a9acae;
  }
  .large {
    flex-direction: column;
    gap: 9px;
  }
  .large + .large {
    margin-left: 13px;
  }
  .large span {
    display: flex;
    align-items: center;
    gap: 3px;
  }
  .split {
    flex: none;
    width: 1px;
    height: 66px;
    margin: 0 12px;
    background: #d6d6d6;
  }
  .gallery {
    box-sizing: border-box;
    display: flex;
    align-items: center;
    gap: 2px;
    height: 50px;
    margin-right: 10px;
    padding: 0 2px;
    border: 1px solid #c3c3c3;
    border-radius: 4px;
  }
  .preset {
    padding: 6px;
    border-radius: 4px;
  }
  .chosen {
    background: #cacaca;
  }
  .drop {
    margin: 0 2px 0 4px;
  }
  .types {
    display: grid;
    grid-template-columns: repeat(5, 42px);
    grid-auto-rows: 28px;
    margin-left: 12px;
  }
  .types button {
    gap: 4px;
  }
  .types + .split {
    margin-left: 0;
  }
  .area {
    display: flex;
    flex-direction: column;
    gap: 8px;
    margin-left: -4px;
    padding-bottom: 2px;
  }
  .combo {
    position: relative;
    width: 170px;
  }
  .combo select {
    box-sizing: border-box;
    width: 100%;
    height: 24px;
    padding: 0 9px;
    border: 1px solid #bfbfbf;
    border-radius: 4px;
    appearance: none;
    background: #fff;
    color: inherit;
    font: inherit;
  }
  .combo :global(.icon) {
    position: absolute;
    top: 6px;
    right: 6px;
  }
  .styles {
    display: flex;
    gap: 14px;
    padding-left: 6px;
  }
  .styles button {
    gap: 4px;
  }

  main {
    flex: 1;
    display: flex;
    min-height: 0;
  }

  /* Slide list */
  .panel {
    position: relative;
    display: flex;
    flex-direction: column;
    width: 323px;
    border-right: 1px solid #c7cacc;
  }
  .switch {
    display: flex;
    height: 41px;
    padding-top: 17px;
  }
  .side {
    flex: 1;
    display: flex;
    justify-content: flex-end;
    align-items: flex-start;
    padding: 2px 22px 0 0;
  }
  .pair {
    display: flex;
    align-items: flex-start;
    gap: 12px;
    margin-right: 10px;
  }
  .on {
    flex-direction: column;
    gap: 2px;
    color: #c6510f;
  }
  .on::after {
    content: "";
    width: 26px;
    height: 2px;
    background: #c6510f;
  }
  .list {
    display: flex;
    flex-direction: column;
    gap: 16px;
    margin: 0;
    padding: 0 32px 0 14px;
    list-style: none;
  }
  li {
    display: flex;
  }
  .no {
    width: 32px;
    padding-top: 4px;
    text-align: center;
  }
  .current .no {
    color: #c6510f;
  }
  .thumb {
    flex: 1;
    border-radius: 2px;
    background: #fff;
    box-shadow: 0 1px 3px rgba(0, 0, 0, 0.2);
  }
  .thumb svg {
    display: block;
    width: 100%;
  }
  .current .thumb {
    outline: 2px solid #d2682e;
  }
  .head {
    font-size: 46px;
    font-weight: bold;
  }
  .body {
    font-size: 24px;
    fill: #3c3c3c;
  }
  .mini {
    font-size: 14px;
    fill: #555;
    text-anchor: middle;
  }
  .end {
    text-anchor: end;
  }
  .mini-title {
    font-size: 20px;
    font-weight: bold;
    fill: #404040;
    text-anchor: middle;
  }
  .thanks {
    font-size: 126px;
    font-weight: bold;
    fill: #5078ce;
  }
  .add {
    margin: auto;
  }
  .panel-scroll {
    position: absolute;
    right: 6px;
    bottom: 50px;
    width: 6px;
    height: 44%;
    border-radius: 3px;
    background: #c7c9ca;
  }

  /* Editor */
  .editor {
    flex: 1;
    display: flex;
    flex-direction: column;
  }
  .workspace {
    flex: 1;
    display: flex;
  }
  .slide {
    flex: 1;
    display: grid;
    place-items: center;
    margin: 24px 64px;
    background: #fff;
    box-shadow: 0 0 2px #a4a4a4;
  }
  .chart {
    position: relative;
    box-sizing: border-box;
    width: 787px;
    padding: 12px 17px 13px 25px;
    border: 1px dashed #cfcfcf;
    color: #595959;
    font: 13px/20px "Liberation Sans", "Noto Sans CJK SC", sans-serif;
  }
  .handle {
    position: absolute;
    box-sizing: border-box;
    width: 12px;
    height: 12px;
    margin: -6px;
    border: 1px solid #7f7f7f;
    border-radius: 50%;
    background: #fff;
  }
  .tl,
  .tc,
  .tr {
    top: 0;
  }
  .bl,
  .bc,
  .br {
    bottom: 0;
  }
  .tl,
  .bl {
    left: 0;
  }
  .tc,
  .bc {
    left: 50%;
  }
  .tr,
  .br {
    right: 0;
  }
  h1 {
    margin: 0 0 6px;
    padding-right: 8px;
    color: #404040;
    font-size: 20px;
    line-height: 28px;
    text-align: center;
  }
  .plot {
    display: block;
    width: 100%;
    overflow: visible;
  }
  .plot text {
    fill: #595959;
    text-anchor: end;
  }
  table {
    width: 100%;
    table-layout: fixed;
    border-collapse: collapse;
    text-align: center;
    line-height: 19px;
  }
  thead {
    line-height: 21px;
  }
  th,
  td {
    padding: 0;
    border: 1px solid #d6d6d6;
    font-weight: normal;
  }
  thead td {
    width: 78px;
    border-width: 0 1px 1px 0;
  }
  .key {
    display: flex;
    align-items: center;
    gap: 3px;
    white-space: nowrap;
  }
  .key i {
    width: 32px;
    height: 3px;
    border-radius: 2px;
  }
  th .key {
    padding-left: 4px;
  }
  .legend {
    display: flex;
    justify-content: center;
    gap: 3px;
    margin-top: 20px;
    padding-right: 8px;
  }
  .chart-tools {
    position: absolute;
    top: 5px;
    left: 801px;
    display: flex;
    flex-direction: column;
    gap: 9px;
  }
  .chart-tools button {
    justify-content: center;
    width: 27px;
    height: 27px;
    border-radius: 4px;
    background: #fff;
    box-shadow: 0 0 4px #a9a9a9;
  }
  .scroll {
    display: flex;
    flex-direction: column;
    align-items: center;
    gap: 8px;
    width: 16px;
    padding: 5px 0 8px;
    fill: #6c6c6c;
  }
  .track {
    flex: 1;
    display: flex;
    flex-direction: column;
  }
  .track::before {
    content: "";
    flex: 614;
  }
  .track::after {
    content: "";
    flex: 76;
  }
  .track i {
    width: 8px;
    height: 75px;
    border-radius: 4px;
    background: #cccdc7;
  }
  .notes {
    height: 25px;
    padding: 7px 12px 0;
    border-top: 1px solid #cdcfcf;
    color: #7d7d7d;
    font-size: 13px;
  }

  /* Right rail */
  .rail {
    position: relative;
    display: flex;
    flex-direction: column;
    align-items: center;
    gap: 24px;
    width: 56px;
    border-left: 1px solid #c9cbca;
  }
  .dash {
    width: 14px;
    height: 2px;
    margin-top: 23px;
    background: #8e8e8e;
  }
  .meter {
    position: absolute;
    right: 3px;
    top: 594px;
    width: 6px;
    height: 57px;
    border: 1px solid #f4f4f0;
    border-radius: 4px;
    background: linear-gradient(#9a9b97 18px, #21c26a 18px, #2fd06f 40px, #6bef74);
    box-shadow: 0 2px 6px rgba(0, 0, 0, 0.25);
  }

  /* Status bar */
  .status {
    display: flex;
    align-items: center;
    flex: none;
    height: 23px;
    padding: 0 17px 0 13px;
    border-top: 1px solid #c7cacc;
  }
  .status > .rule {
    margin: 0 15px 0 12px;
  }
  .status button {
    gap: 5px;
  }
  .right {
    display: flex;
    align-items: center;
    margin-left: auto;
  }
  .right .rule {
    margin: 0 14px;
  }
  .remark {
    margin-right: 22px;
  }
  .views {
    display: flex;
    gap: 8px;
    margin: 0 -6px;
  }
  .views button {
    justify-content: center;
    width: 24px;
    height: 23px;
    border-radius: 3px;
  }
  .views .picked {
    background: #cfcfca;
  }
  .right .play {
    margin: 0 9px 0 -4px;
    border-radius: 3px;
    background: #e3661b;
  }
  .fit {
    margin-right: 19px;
  }
  .right .percent {
    gap: 10px;
    margin-right: 18px;
  }
  input[type="range"] {
    width: 112px;
    height: 10px;
    margin: 0 7px 0 12px;
    appearance: none;
    background: linear-gradient(90deg, #2b55e0 var(--pos), #b9bab4 var(--pos)) center / 100% 2px no-repeat;
  }
  input[type="range"]::-webkit-slider-thumb {
    width: 10px;
    height: 10px;
    border-radius: 50%;
    appearance: none;
    background: #fff;
    box-shadow: 0 0 2px #888;
  }

  .ime {
    position: absolute;
    right: 37px;
    bottom: 41px;
    display: flex;
    align-items: center;
    gap: 4px;
    box-sizing: border-box;
    height: 25px;
    padding: 0 7px 0 5px;
    border-radius: 5px;
    background: #fff;
    box-shadow: 0 0 4px #333;
    color: #333;
  }
  .mark {
    position: absolute;
    right: 11px;
    bottom: 7px;
    display: flex;
    align-items: center;
    gap: 1px;
    opacity: 0.85;
    pointer-events: none;
  }
  .mark b {
    display: block;
    color: #4288cd;
    font-size: 21px;
    line-height: 24px;
  }
  .mark em {
    display: block;
    color: #45b565;
    font: bold 16px/20px "Liberation Sans", sans-serif;
  }
</style>
